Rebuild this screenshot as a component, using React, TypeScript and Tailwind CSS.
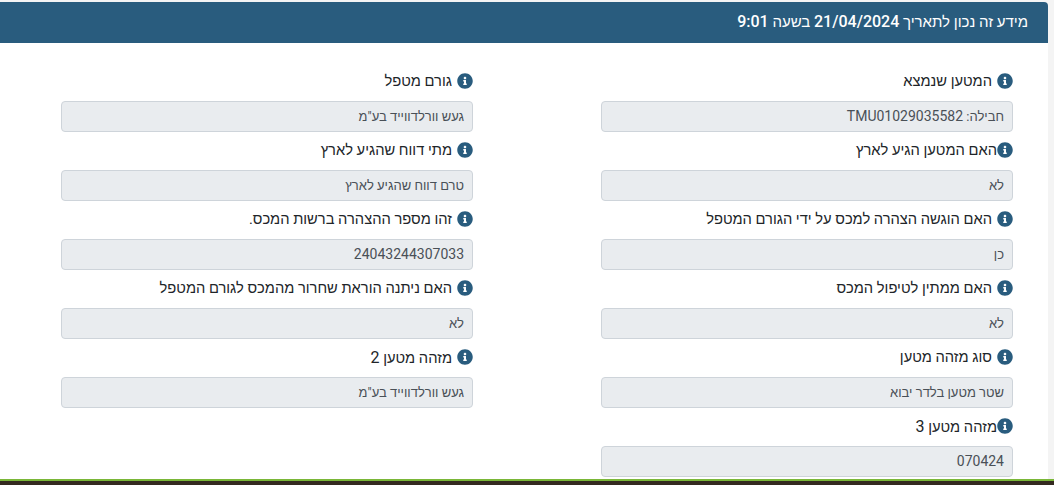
import React from 'react';
import { FaInfoCircle } from 'react-icons/fa';

interface FieldData {
  label: React.ReactNode;
  value: React.ReactNode;
  tight?: boolean;
}

// Latin text and digits come out larger than the Hebrew beside them
const LabelNum = ({ children }: { children: React.ReactNode }) => <span className="text-base">{children}</span>;
const ValueNum = ({ children }: { children: React.ReactNode }) => <span className="text-sm">{children}</span>;

const rightFields: FieldData[] = [
  { label: 'המטען שנמצא', value: <>חבילה: <ValueNum>TMU01029035582</ValueNum></> },
  { label: 'האם המטען הגיע לארץ', value: 'לא', tight: true },
  { label: 'האם הוגשה הצהרה למכס על ידי הגורם המטפל', value: 'כן' },
  { label: 'האם ממתין לטיפול המכס', value: 'לא' },
  { label: 'סוג מזהה מטען', value: 'שטר מטען בלדר יבוא' },
  { label: <>מזהה מטען <LabelNum>3</LabelNum></>, value: <ValueNum>070424</ValueNum>, tight: true },
];

const leftFields: FieldData[] = [
  { label: 'גורם מטפל', value: 'געש וורלדווייד בע"מ' },
  { label: 'מתי דווח שהגיע לארץ', value: 'טרם דווח שהגיע לארץ' },
  { label: 'זהו מספר ההצהרה ברשות המכס.', value: <ValueNum>24043244307033</ValueNum> },
  { label: 'האם ניתנה הוראת שחרור מהמכס לגורם המטפל', value: 'לא' },
  { label: <>מזהה מטען <LabelNum>2</LabelNum></>, value: 'געש וורלדווייד בע"מ' },
];

function Field({ label, value, tight }: FieldData) {
  return (
    <div>
      <div className={`flex h-[38px] items-center pb-[2px] text-[14.7px] text-[#212529] ${tight ? '' : 'gap-[5px]'}`}>
        <FaInfoCircle className="h-4 w-4 shrink-0 text-[#295c7e]" />
        <span className="pt-px">{label}</span>
      </div>
      <div className="flex h-[31px] items-center rounded border border-[#ced4da] bg-[#e9ecef] px-[8px] text-[13px] text-[#495057]">
        <span>{value}</span>
      </div>
    </div>
  );
}

export default function App() {
  return (
    <div
      dir="rtl"
      className="flex h-[485px] flex-col overflow-hidden bg-[#f4f4f4] font-['Roboto','Liberation_Sans',sans-serif]"
    >
      <div className="min-h-0 flex-1 overflow-hidden pr-[6px] pt-[2px]">
        <div className="h-full rounded-tr bg-white">
          <div className="flex h-[41px] items-center rounded-tr bg-[#295c7e] pb-px pr-[20px] text-[15px] text-white">
            <span>
              מידע זה נכון לתאריך <span className="text-base font-medium">21/04/2024</span> בשעה{' '}
              <span className="text-base font-medium">9:01</span>
            </span>
          </div>
          <div className="grid grid-cols-2 items-start gap-x-[128px] pl-[61px] pr-[35px] pt-[20px]">
            <div className="flex flex-col">
              {rightFields.map((f, i) => (
                <Field key={i} {...f} />
              ))}
            </div>
            <div className="flex flex-col">
              {leftFields.map((f, i) => (
                <Field key={i} {...f} />
              ))}
            </div>
          </div>
        </div>
      </div>
      <div className="h-[2px] shrink-0 bg-[#7ab738]" />
      <div className="h-1 shrink-0 bg-[#33291f]" />
    </div>
  );
}
